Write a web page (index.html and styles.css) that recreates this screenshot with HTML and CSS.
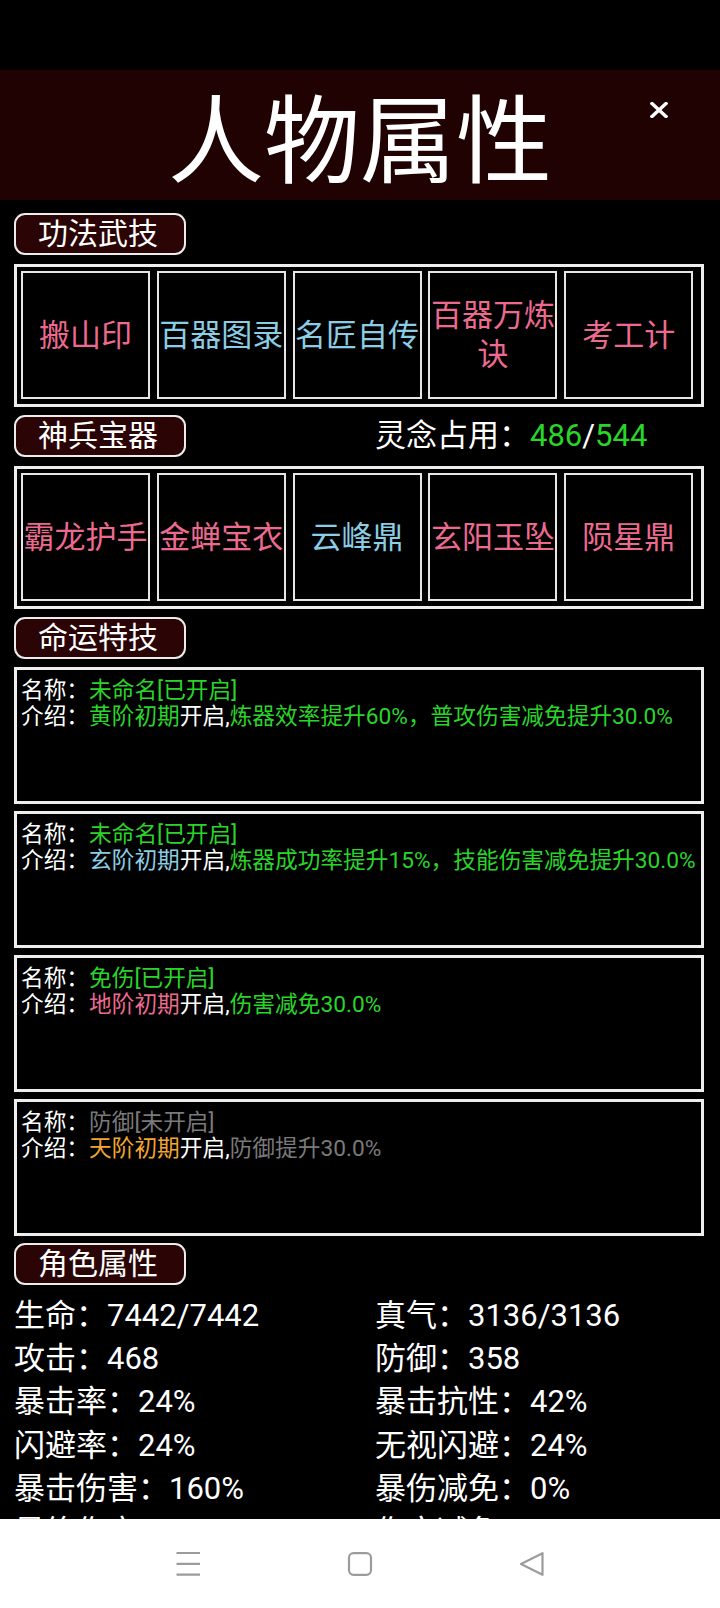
FILE: index.html
```html
<!DOCTYPE html>
<html lang="zh">

<head>
    <meta charset="UTF-8">
    <meta name="viewport" content="width=device-width, initial-scale=1.0">
    <title>人物属性</title>
    <link rel="stylesheet" href="styles.css">
</head>

<body>
    <div class="status"></div>

    <header class="top">
        <h1>人物属性</h1>
        <svg class="close" width="18" height="16" viewBox="0 0 18 16">
            <path d="M2 1.5 L16 14.5 M16 1.5 L2 14.5" stroke="#fff" stroke-width="3.4" stroke-linecap="square" />
        </svg>
    </header>

    <main class="content">
        <div class="sec-head">
            <span class="tab">功法武技</span>
        </div>
        <div class="slots">
            <div class="slot pink">搬山印</div>
            <div class="slot blue">百器图录</div>
            <div class="slot blue">名匠自传</div>
            <div class="slot pink">百器万炼诀</div>
            <div class="slot pink">考工计</div>
        </div>

        <div class="sec-head">
            <span class="tab">神兵宝器</span>
            <span class="usage">灵念占用：<span class="green">486</span>/<span class="green">544</span></span>
        </div>
        <div class="slots">
            <div class="slot pink">霸龙护手</div>
            <div class="slot pink">金蝉宝衣</div>
            <div class="slot blue">云峰鼎</div>
            <div class="slot pink">玄阳玉坠</div>
            <div class="slot pink">陨星鼎</div>
        </div>

        <div class="sec-head">
            <span class="tab">命运特技</span>
        </div>
        <div class="traits">
            <div class="trait">
                <p>名称：<span class="green">未命名[已开启]</span></p>
                <p>介绍：<span class="green">黄阶初期</span>开启,<span class="green">炼器效率提升60%，普攻伤害减免提升30.0%</span></p>
            </div>
            <div class="trait">
                <p>名称：<span class="green">未命名[已开启]</span></p>
                <p>介绍：<span class="blue">玄阶初期</span>开启,<span class="green">炼器成功率提升15%，技能伤害减免提升30.0%</span></p>
            </div>
            <div class="trait">
                <p>名称：<span class="green">免伤[已开启]</span></p>
                <p>介绍：<span class="pink">地阶初期</span>开启,<span class="green">伤害减免30.0%</span></p>
            </div>
            <div class="trait">
                <p>名称：<span class="gray">防御[未开启]</span></p>
                <p>介绍：<span class="orange">天阶初期</span>开启,<span class="gray">防御提升30.0%</span></p>
            </div>
        </div>

        <div class="sec-head last">
            <span class="tab">角色属性</span>
        </div>
        <div class="stats">
            <span>生命：7442/7442</span>
            <span>真气：3136/3136</span>
            <span>攻击：468</span>
            <span>防御：358</span>
            <span>暴击率：24%</span>
            <span>暴击抗性：42%</span>
            <span>闪避率：24%</span>
            <span>无视闪避：24%</span>
            <span>暴击伤害：160%</span>
            <span>暴伤减免：0%</span>
            <span>最终伤害：0%</span>
            <span>伤害减免：0%</span>
        </div>
    </main>

    <nav class="navbar">
        <svg width="40" height="40" viewBox="0 0 40 40">
            <path d="M8.5 9 H32 M8.5 19.8 H32 M8.5 30.6 H32" stroke="#9c9c9c" stroke-width="2.2" fill="none" />
        </svg>
        <svg width="40" height="40" viewBox="0 0 40 40">
            <rect x="9" y="9.2" width="22" height="21.6" rx="4.5" stroke="#9c9c9c" stroke-width="2.2" fill="none" />
        </svg>
        <svg width="40" height="40" viewBox="0 0 40 40">
            <path d="M30.5 9.2 L9 20 L30.5 30.8 Z" stroke="#9c9c9c" stroke-width="2.2" stroke-linejoin="round" fill="none" />
        </svg>
    </nav>
</body>

</html>
```

FILE: styles.css
```css
* {
    margin: 0;
    padding: 0;
    box-sizing: border-box;
}

body {
    width: 720px;
    height: 1608px;
    overflow: hidden;
    background-color: #000;
    color: #fff;
    font-family: Roboto, "Noto Sans CJK SC", sans-serif;
}

.status {
    height: 70px;
}

.top {
    position: relative;
    height: 130px;
    background-color: #200203;
    display: flex;
    align-items: center;
    justify-content: center;
}

.top h1 {
    font-size: 96px;
    font-weight: 400;
    line-height: 1;
    padding-top: 14px;
}

.close {
    position: absolute;
    left: 650px;
    top: 32px;
}

.content {
    padding: 13px 16px 0 14px;
}

.sec-head {
    display: grid;
    grid-template-columns: 361px 1fr;
    align-items: center;
    height: 42px;
    margin-top: 8px;
}

.sec-head:first-child {
    margin-top: 0;
}

.sec-head.last {
    margin-top: 7px;
}

.tab {
    width: 172px;
    height: 42px;
    border: 2px solid #ececec;
    border-radius: 11px;
    background-color: #2b0506;
    font-size: 30px;
    line-height: 37px;
    padding-left: 22px;
}

.usage {
    font-size: 31px;
    line-height: 42px;
}

.slots {
    margin-top: 9px;
    border: 3px solid #eee;
    padding: 4px 0 5px 4px;
    display: grid;
    grid-template-columns: repeat(5, 129px);
    column-gap: 6.8px;
}

.slot {
    height: 128px;
    border: 2px solid #e6e6e6;
    display: flex;
    align-items: center;
    justify-content: center;
    text-align: center;
    font-size: 31px;
    line-height: 39px;
}

.traits {
    margin-top: 8px;
    display: flex;
    flex-direction: column;
    gap: 7px;
}

.trait {
    height: 137px;
    border: 3px solid #eee;
    padding: 8px 4px;
    font-size: 22.7px;
    line-height: 26px;
    white-space: nowrap;
}

.stats {
    margin-top: 9px;
    display: grid;
    grid-template-columns: 361px 1fr;
    font-size: 31px;
    line-height: 43.2px;
}

.pink {
    color: #ec6a8f;
}

.blue {
    color: #8acde4;
}

.green {
    color: #2ad52a;
}

.gray {
    color: #7a7a7a;
}

.orange {
    color: #f3a531;
}

.navbar {
    position: fixed;
    left: 0;
    bottom: 0;
    width: 720px;
    height: 89px;
    background-color: #fff;
    display: flex;
    align-items: center;
    justify-content: center;
    gap: 132px;
}
```
